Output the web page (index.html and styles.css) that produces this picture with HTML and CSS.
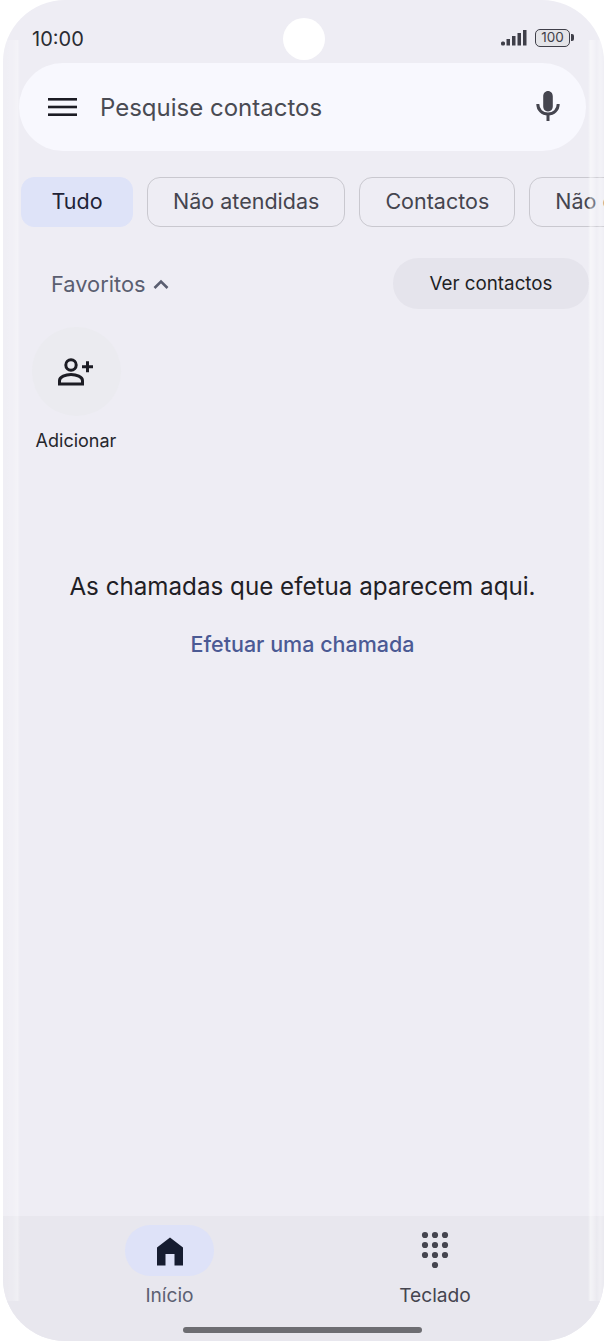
FILE: index.html
```html
<!DOCTYPE html>
<html lang="pt">
<head>
<meta charset="utf-8">
<title>Telefone</title>
<link rel="stylesheet" href="styles.css">
</head>
<body>
<div class="phone">
  <div class="edge edge-left"></div>
  <div class="edge edge-right"></div>
  <div class="camera"></div>
  <header class="status">
    <span class="time">10:00</span>
    <div class="status-icons">
      <svg class="signal" width="26" height="16" viewBox="0 0 26 16"><g fill="#3f3f49"><rect x="0" y="11.500" width="4" height="4" rx="1.500"/><rect x="5.500" y="9" width="3.500" height="6.500"/><rect x="11" y="6" width="3.500" height="9.500"/><rect x="16.500" y="3" width="3.500" height="12.500"/><rect x="22" y="0" width="3.500" height="15.500"/></g></svg>
      <div class="battery"><span class="battery-body">100</span><span class="battery-cap"></span></div>
    </div>
  </header>
  <div class="search">
    <svg class="menu" width="30" height="20" viewBox="0 0 30 20"><g fill="#1c1c24"><rect x="0" y="1" width="29" height="2.600"/><rect x="0" y="8.700" width="29" height="2.600"/><rect x="0" y="16.400" width="29" height="2.600"/></g></svg>
    <span class="search-text">Pesquise contactos</span>
    <svg class="mic" width="24" height="32" viewBox="0 0 24 32"><path d="M12 20.500c-3 0-4.800-2.300-4.800-5.200V5.400C7.200 2.300 9.200 0 12 0s4.800 2.300 4.800 5.400v9.900c0 2.900-1.800 5.200-4.800 5.200z" fill="#45454f"/><path d="M1.800 13c0 6 4.400 10 10.200 10s10.200-4 10.200-10" fill="none" stroke="#45454f" stroke-width="3"/><rect x="10.500" y="22" width="3" height="8" fill="#45454f"/></svg>
  </div>
  <nav class="chips">
    <span class="chip chip-on">Tudo</span>
    <span class="chip">Não atendidas</span>
    <span class="chip">Contactos</span>
    <span class="chip chip-cut">Não e</span>
  </nav>
  <section class="fav-head">
    <div class="fav-title">
      <span>Favoritos</span>
      <svg width="16" height="10" viewBox="0 0 16 10"><path d="M1.500 9l6.500-6.500 6.500 6.500" fill="none" stroke="#5a5e70" stroke-width="2.600"/></svg>
    </div>
    <span class="see-all">Ver contactos</span>
  </section>
  <section class="add">
    <div class="add-circle">
      <svg width="36" height="28" viewBox="0 0 36 28"><g fill="none" stroke="#1c1c24" stroke-width="3"><circle cx="13" cy="7" r="5.200"/><path d="M1.500 26v-3.300c0-3.700 6-6.200 11.500-6.200s11.500 2.500 11.500 6.200V26z"/></g><path d="M24 8.800h11M29.500 3.300v11" stroke="#1c1c24" stroke-width="3" fill="none"/></svg>
    </div>
    <span class="add-label">Adicionar</span>
  </section>
  <main class="empty">
    <p class="empty-text">As chamadas que efetua aparecem aqui.</p>
    <a class="empty-link" href="#">Efetuar uma chamada</a>
  </main>
  <footer class="bottom">
    <div class="tab">
      <div class="pill">
        <svg width="28" height="30" viewBox="0 0 28 30"><path d="M14 1.500L27 11.500V29.500H18.500V18H9.500V29.500H1V11.500z" fill="#161c30"/></svg>
      </div>
      <span class="tab-label tab-label-on">Início</span>
    </div>
    <div class="tab">
      <div class="pill pill-off">
        <svg width="28" height="40" viewBox="0 0 28 40"><g fill="#45454f"><circle cx="4" cy="4" r="3.100"/><circle cx="14" cy="4" r="3.100"/><circle cx="24" cy="4" r="3.100"/><circle cx="4" cy="14" r="3.100"/><circle cx="14" cy="14" r="3.100"/><circle cx="24" cy="14" r="3.100"/><circle cx="4" cy="24" r="3.100"/><circle cx="14" cy="24" r="3.100"/><circle cx="24" cy="24" r="3.100"/><circle cx="14" cy="34" r="3.100"/></g></svg>
      </div>
      <span class="tab-label">Teclado</span>
    </div>
    <div class="home-bar"></div>
  </footer>
</div>
</body>
</html>
```
FILE: styles.css
```css
* { box-sizing: border-box; }
html, body { margin: 0; padding: 0; background: #fff; }
body { font-family: Inter, "Liberation Sans", sans-serif; width: 605px; height: 1342px; overflow: hidden; }

.phone {
  position: relative;
  width: 601px;
  height: 1341px;
  margin-left: 3px;
  border-radius: 62px;
  background: #eeedf4;
  display: flex;
  flex-direction: column;
  overflow: hidden;
}

.edge { position: absolute; top: 40px; bottom: 40px; z-index: 5; pointer-events: none; }
.edge-left {
  left: 0;
  width: 17px;
  background: linear-gradient(90deg, rgba(255,255,255,.1) 0, rgba(255,255,255,.2) 60%, rgba(255,255,255,.35) 85%, rgba(255,255,255,0) 100%);
}
.edge-right {
  right: 0;
  width: 16px;
  background: linear-gradient(270deg, rgba(255,255,255,.1) 0, rgba(255,255,255,.35) 25%, rgba(255,255,255,.1) 45%, rgba(255,255,255,.4) 70%, rgba(255,255,255,.5) 85%, rgba(255,255,255,0) 100%);
}

.camera {
  position: absolute;
  left: 280px;
  top: 18px;
  width: 42px;
  height: 42px;
  border-radius: 50%;
  background: #fff;
}

.status {
  height: 63px;
  flex: none;
  display: flex;
  justify-content: space-between;
  align-items: center;
  padding: 14px 30px 0 29px;
}
.time { font-size: 20px; font-weight: 400; color: #2a2b32; }
.status-icons { display: flex; align-items: center; gap: 8px; margin-top: -2px; }
.signal { display: block; }
.battery { display: flex; align-items: center; gap: 1px; }
.battery-body {
  width: 35px;
  height: 18px;
  border: 1.500px solid #3f3f49;
  border-radius: 5px;
  font-size: 13.500px;
  line-height: 15px;
  text-align: center;
  color: #3f3f49;
  background: #e4e4e8;
}
.battery-cap { width: 3px; height: 7px; background: #3f3f49; border-radius: 0 2px 2px 0; }

.search {
  flex: none;
  margin: 0 18px 0 16px;
  height: 88px;
  border-radius: 44px;
  background: #f8f8fe;
  display: flex;
  align-items: center;
  padding: 0 26px 0 29px;
}
.search-text { margin-left: 22px; font-size: 24px; color: #4a4b53; flex: 1; }
.menu { display: block; }
.mic { display: block; }

.chips {
  flex: none;
  margin-top: 26px;
  padding-left: 18px;
  height: 50px;
  display: flex;
  gap: 14px;
  overflow: hidden;
}
.chip {
  flex: none;
  height: 50px;
  padding: 0 25px;
  border: 1.500px solid #c9c8cf;
  border-radius: 13px;
  font-size: 21.500px;
  line-height: 47px;
  font-weight: 400;
  color: #45454f;
  white-space: nowrap;
}
.chip-on { background: #dee3f8; border-color: #dee3f8; color: #1f2337; padding: 0 29.500px; }
.chip-cut { padding-right: 40px; }

.fav-head {
  flex: none;
  margin-top: 31px;
  height: 51px;
  display: flex;
  justify-content: space-between;
  align-items: center;
  padding: 0 15px 0 48px;
}
.fav-title { display: flex; align-items: center; gap: 8px; font-size: 21.800px; font-weight: 400; color: #5a5e70; }
.see-all {
  width: 196px;
  height: 51px;
  border-radius: 25px;
  background: #e5e4ec;
  font-size: 18.800px;
  line-height: 51px;
  font-weight: 400;
  text-align: center;
  color: #1e1f25;
}

.add {
  flex: none;
  margin-top: 18px;
  width: 146px;
  display: flex;
  flex-direction: column;
  align-items: center;
}
.add-circle {
  width: 89px;
  height: 89px;
  border-radius: 50%;
  background: #ebebf0;
  display: flex;
  align-items: center;
  justify-content: center;
}
.add-label { margin-top: 14px; font-size: 18px; color: #25262c; line-height: 22px; }

.empty { flex: 1; display: flex; flex-direction: column; align-items: center; padding: 120px 2px 0 0; }
.empty-text { margin: 0; font-size: 24.200px; line-height: 30px; color: #1f2025; }
.empty-link { margin-top: 27px; font-size: 21.500px; line-height: 30px; font-weight: 500; color: #4b5a94; text-decoration: none; }

.bottom {
  flex: none;
  height: 125px;
  background: #e8e7ee;
  display: flex;
  padding: 9px 0 0 0;
  position: relative;
}
.tab { width: 333px; display: flex; flex-direction: column; align-items: center; }
.tab:nth-child(2) { width: 198px; }
.pill {
  width: 89px;
  height: 51px;
  border-radius: 25px;
  background: #dee2f8;
  display: flex;
  align-items: center;
  justify-content: center;
}
.pill-off { background: transparent; }
.tab-label { margin-top: 7px; font-size: 19.200px; line-height: 24px; font-weight: 400; color: #45454f; }
.tab-label-on { color: #5c6072; }
.home-bar {
  position: absolute;
  left: 180px;
  bottom: 8px;
  width: 239px;
  height: 6px;
  border-radius: 3px;
  background: #6d6d72;
}
```
